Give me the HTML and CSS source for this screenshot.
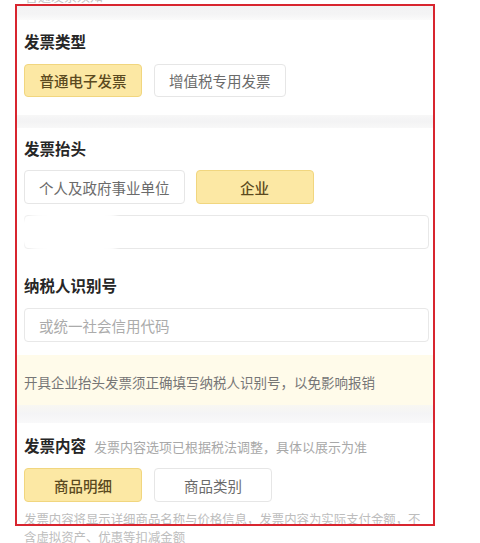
FILE: index.html
```html
<!DOCTYPE html>
<html lang="zh-CN">
<head>
<meta charset="utf-8">
<link rel="stylesheet" href="styles.css">
</head>
<body>
<div class="page">
  <div class="top-strip"><span class="cut-text">普通发票须知</span></div>
  <div class="band band-top"></div>

  <section class="sec sec-type">
    <h2 class="title">发票类型</h2>
    <div class="opts">
      <span class="opt on">普通电子发票</span>
      <span class="opt">增值税专用发票</span>
    </div>
  </section>

  <div class="band band-mid"></div>

  <section class="sec sec-head">
    <h2 class="title">发票抬头</h2>
    <div class="opts">
      <span class="opt">个人及政府事业单位</span>
      <span class="opt on">企业</span>
    </div>
    <div class="field field-name">
      <div class="input"></div>
      <div class="smudge"></div>
    </div>
    <h2 class="title title-tax">纳税人识别号</h2>
    <div class="field">
      <div class="input"><span class="ph">或统一社会信用代码</span></div>
    </div>
  </section>

  <div class="notice">开具企业抬头发票须正确填写纳税人识别号，以免影响报销</div>
  <div class="band band-notice"></div>

  <section class="sec sec-content">
    <div class="title-row">
      <h2 class="title">发票内容</h2>
      <span class="sub">发票内容选项已根据税法调整，具体以展示为准</span>
    </div>
    <div class="opts">
      <span class="opt on">商品明细</span>
      <span class="opt">商品类别</span>
    </div>
    <p class="desc">发票内容将显示详细商品名称与价格信息，发票内容为实际支付金额，不含虚拟资产、优惠等扣减金额</p>
  </section>
</div>
<div class="redbox"></div>
</body>
</html>
```

FILE: styles.css
```css
* { box-sizing: border-box; }
html, body {
  margin: 0;
  padding: 0;
  background: #ffffff;
  width: 480px;
  height: 543px;
  overflow: hidden;
  font-family: "Noto Sans CJK SC", "Noto Sans", sans-serif;
}
.page {
  margin-left: 17px;
  width: 418px;
  background: #ffffff;
}
.top-strip {
  height: 5px;
  overflow: hidden;
  position: relative;
}
.cut-text {
  display: block;
  margin-top: -12px;
  padding-left: 8px;
  font-size: 13px;
  line-height: 16px;
  color: #c4c4c4;
}
.band {
  background: #f4f4f5;
}
.band-top {
  height: 15px;
  background: linear-gradient(#f3f3f4 0%, #f4f4f5 60%, #fbfbfb 100%);
}
.band-mid {
  height: 13px;
  background: linear-gradient(#f7f7f7 0%, #f3f3f4 50%, #f8f8f8 100%);
}
.band-notice {
  height: 18px;
  background: linear-gradient(#f8f7f2 0%, #f4f4f6 50%, #f9f9fa 100%);
}
.sec {
  padding: 0 6px 0 7px;
}
.sec-type { padding-top: 10px; padding-bottom: 18px; }
.sec-head { padding-top: 9px; padding-bottom: 13px; }
.sec-content { padding-top: 11px; }
.title {
  margin: 0;
  font-size: 15.5px;
  line-height: 22px;
  font-weight: 700;
  color: #262626;
}
.title-tax { margin-top: 25px; }
.opts {
  display: flex;
  gap: 12px;
  margin-top: 12px;
}
.sec-head .opts { margin-top: 11px; gap: 11px; }
.opt {
  display: flex;
  align-items: center;
  justify-content: center;
  min-width: 118px;
  height: 34px;
  padding: 0 14px;
  border: 1px solid #e6e6e6;
  border-radius: 4px;
  background: #ffffff;
  font-size: 14.5px;
  color: #6b6b6b;
}
.sec-type .opt { height: 33px; }
.opt.on {
  background: #fce8a4;
  border-color: #f1d67f;
  color: #5b4a20;
  font-weight: 500;
}
.field {
  position: relative;
  margin-top: 11px;
}
.sec-head .field:last-child { margin-top: 12px; }
.input {
  height: 34px;
  border: 1px solid #e8e8e8;
  border-radius: 4px;
  background: #ffffff;
  display: flex;
  align-items: center;
  padding-left: 14px;
}
.ph {
  font-size: 14.5px;
  color: #ababab;
}
.smudge {
  position: absolute;
  left: -6px;
  top: -4px;
  width: 100px;
  height: 42px;
  background: #ffffff;
  border-radius: 40% 20% 20% 40%;
  filter: blur(2px);
}
.notice {
  height: 50px;
  background: #fffbea;
  padding: 0 6px 0 7px;
  display: flex;
  align-items: center;
  padding-top: 4px;
  font-size: 13.5px;
  color: #767676;
}
.title-row {
  display: flex;
  align-items: baseline;
  gap: 8px;
}
.sub {
  font-size: 13px;
  color: #a8a8a8;
}
.sec-content .opts { margin-top: 12px; }
.desc {
  margin: 8px 0 0 0;
  font-size: 12.4px;
  line-height: 18px;
  color: #bdbdbd;
  padding-right: 4px;
}
.redbox {
  position: absolute;
  left: 15px;
  top: 4px;
  width: 420px;
  height: 522px;
  border: 2px solid #d8252f;
  pointer-events: none;
}
```
